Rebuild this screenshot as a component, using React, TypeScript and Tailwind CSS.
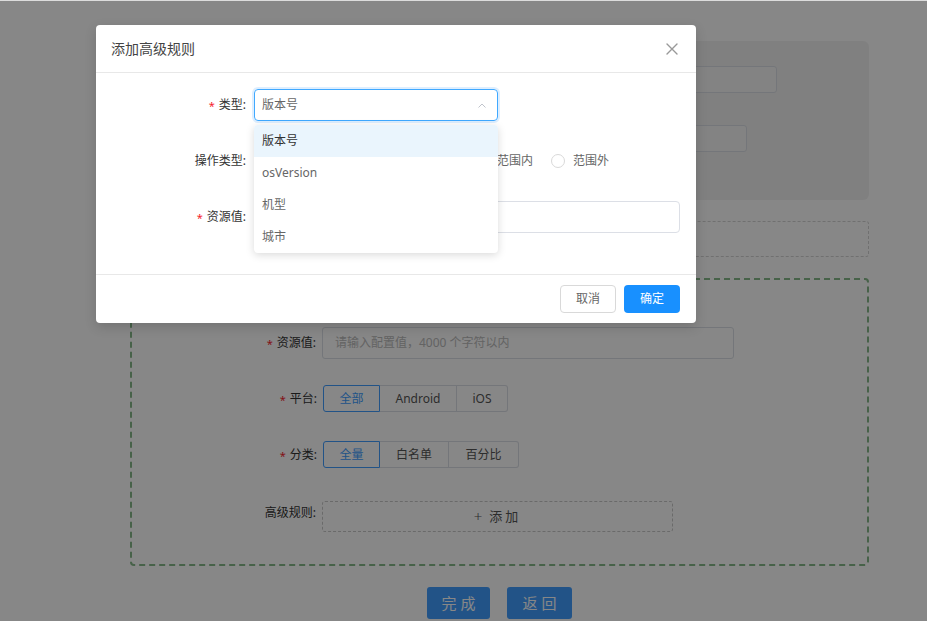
import React from "react";

const font = "font-['Noto_Sans','Noto_Sans_CJK_SC',sans-serif]";

function Req() {
  return <span className="text-[#f5222d] text-[11px] mr-[4px] relative top-[1px]">*</span>;
}

function Radio({ label }: { label: string }) {
  return (
    <div className="flex items-center mr-[18px] shrink-0">
      <span className="w-[14px] h-[14px] rounded-full border border-[#d9d9d9] bg-white" />
      <span className="ml-[8px] text-[12px] text-[#666]">{label}</span>
    </div>
  );
}

function Segmented({ items, widths }: { items: string[]; widths: string[] }) {
  return (
    <div className="flex h-[27px]">
      {items.map((it, i) => (
        <div
          key={it}
          className={
            "flex items-center justify-center text-[12px] border h-full " +
            widths[i] +
            " " +
            (i === 0
              ? "border-[#409eff] text-[#409eff] rounded-l-[3px]"
              : "border-[#dcdfe6] border-l-0 text-[#555]") +
            (i === items.length - 1 ? " rounded-r-[3px]" : "")
          }
        >
          {it}
        </div>
      ))}
    </div>
  );
}

export default function App() {
  return (
    <div className={"relative w-[927px] h-[621px] overflow-hidden bg-white border-t border-[#dcdcdc] " + font}>
      {/* background page */}
      <div className="flex flex-col pl-[130px] w-[869px]">
        <div className="mt-[40px] h-[159px] rounded-[6px] bg-[#f2f2f2] flex flex-col pt-[25px] pl-[192px]">
          <div className="w-[455px] h-[27px] rounded-[3px] border border-[#dcdfe6] bg-[#f7f7f7]" />
          <div className="mt-[32px] w-[425px] h-[27px] rounded-[3px] border border-[#dcdfe6] bg-[#f7f7f7]" />
        </div>
        <div className="mt-[21px] h-[36px] rounded-[3px] border border-dashed border-[#d4d4d4]" />
        <div className="mt-[21px] h-[288px] rounded-[4px] border-2 border-dashed border-[#86b98a] flex flex-col">
          <div className="mt-[47px] h-[32px] flex items-center">
            <div className="w-[190px] pr-[6px] text-right text-[12px] text-[#333]">
              <Req />资源值:
            </div>
            <div className="w-[412px] h-[32px] rounded-[3px] border border-[#dcdfe6] flex items-center px-[12px] text-[12px] text-[#bbb]">
              请输入配置值，4000 个字符以内
            </div>
          </div>
          <div className="mt-[26px] h-[27px] flex items-center">
            <div className="w-[191px] pr-[6px] text-right text-[12px] text-[#333]">
              <Req />平台:
            </div>
            <Segmented items={["全部", "Android", "iOS"]} widths={["w-[57px]", "w-[77px]", "w-[51px]"]} />
          </div>
          <div className="mt-[29px] h-[27px] flex items-center">
            <div className="w-[191px] pr-[6px] text-right text-[12px] text-[#333]">
              <Req />分类:
            </div>
            <Segmented items={["全量", "白名单", "百分比"]} widths={["w-[57px]", "w-[69px]", "w-[70px]"]} />
          </div>
          <div className="mt-[33px] h-[31px] flex items-start">
            <div className="w-[190px] pr-[6px] text-right text-[12px] text-[#333] pt-[3px]">高级规则:</div>
            <div className="w-[351px] h-[31px] rounded-[3px] border border-dashed border-[#c8c8c8] flex items-center justify-center text-[13px] text-[#555] tracking-[3px]">
              <span className="text-[15px] mr-[4px] leading-none font-light">+</span>添加
            </div>
          </div>
        </div>
        <div className="mt-[21px] flex justify-center gap-[17px]">
          <div className="w-[63px] h-[32px] rounded-[3px] bg-[#409eff] text-white text-[15px] tracking-[4px] flex items-center justify-center pl-[4px]">
            完成
          </div>
          <div className="w-[65px] h-[32px] rounded-[3px] bg-[#409eff] text-white text-[15px] tracking-[4px] flex items-center justify-center pl-[4px]">
            返回
          </div>
        </div>
      </div>

      {/* overlay */}
      <div className="absolute inset-0 bg-black/[0.47]" />

      {/* modal */}
      <div className="absolute left-[96px] top-[24px] w-[600px] bg-white rounded-[4px] shadow-[0_4px_12px_rgba(0,0,0,0.15)] flex flex-col">
        <div className="h-[48px] border-b border-[#e8e8e8] flex items-center justify-between pl-[15px] pr-[18px]">
          <span className="text-[14px] text-[#444]">添加高级规则</span>
          <svg width="12" height="12" viewBox="0 0 12 12">
            <path d="M1 1 L11 11 M11 1 L1 11" stroke="#999" strokeWidth="1.4" strokeLinecap="round" />
          </svg>
        </div>
        <div className="relative flex flex-col pt-[16px] pb-[41px]">
          <div className="h-[32px] flex items-center">
            <div className="w-[158px] pr-[8px] text-right text-[12px] text-[#333]">
              <Req />类型:
            </div>
            <div className="w-[244px] h-[32px] rounded-[4px] border border-[#40a9ff] shadow-[0_0_0_2px_rgba(24,144,255,0.15)] flex items-center justify-between pl-[7px] pr-[11px] text-[12px] text-[#666]">
              <span>版本号</span>
              <svg width="8" height="5" viewBox="0 0 8 5">
                <path d="M0.5 4.5 L4 1 L7.5 4.5" stroke="#c0c4cc" strokeWidth="1" fill="none" />
              </svg>
            </div>
          </div>
          <div className="mt-[24px] h-[32px] flex items-center">
            <div className="w-[158px] pr-[8px] text-right text-[12px] text-[#333]">操作类型:</div>
            <div className="w-[221px] shrink-0" />
            <Radio label="范围内" />
            <Radio label="范围外" />
          </div>
          <div className="mt-[24px] h-[32px] flex items-center">
            <div className="w-[158px] pr-[8px] text-right text-[12px] text-[#333]">
              <Req />资源值:
            </div>
            <div className="w-[426px] h-[32px] rounded-[4px] border border-[#dcdfe6]" />
          </div>

          {/* dropdown */}
          <div className="absolute left-[158px] top-[52px] w-[244px] bg-white rounded-[4px] shadow-[0_2px_8px_rgba(0,0,0,0.15)] flex flex-col overflow-hidden">
            <div className="h-[32px] flex items-center px-[8px] text-[12px] text-[#333] bg-[#eaf5fd]">版本号</div>
            <div className="h-[32px] flex items-center px-[8px] text-[12px] text-[#666]">osVersion</div>
            <div className="h-[32px] flex items-center px-[8px] text-[12px] text-[#666]">机型</div>
            <div className="h-[32px] flex items-center px-[8px] text-[12px] text-[#666]">城市</div>
          </div>
        </div>
        <div className="border-t border-[#e8e8e8] py-[10px] pr-[16px] flex justify-end gap-[8px]">
          <div className="w-[56px] h-[28px] rounded-[4px] border border-[#d9d9d9] flex items-center justify-center text-[12px] text-[#666]">
            取消
          </div>
          <div className="w-[56px] h-[28px] rounded-[4px] bg-[#1890ff] flex items-center justify-center text-[12px] text-white">
            确定
          </div>
        </div>
      </div>
    </div>
  );
}
